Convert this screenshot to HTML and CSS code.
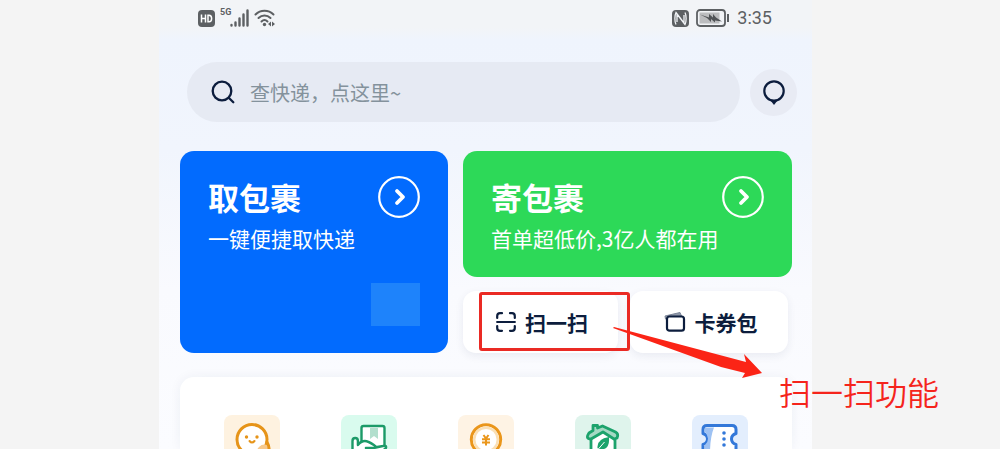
FILE: index.html
```html
<!DOCTYPE html>
<html lang="zh-CN">
<head>
  <meta charset="UTF-8">
  <meta name="viewport" content="width=device-width, initial-scale=1.0">
  <title>扫一扫功能</title>
  <link rel="stylesheet" href="styles.css">
</head>
<body>
  <main class="phone">
    <header class="status">
      <div class="status-group">
        <svg width="17" height="17" viewBox="0 0 17 17">
          <rect width="17" height="17" rx="4" fill="#5d6063"/>
          <path d="M3.500 4.500v8M7.500 4.500v8M3.500 8.500h4M10 5.200v6.600h1c3.500 0 3.500-6.600 0-6.600z" fill="none" stroke="#fff" stroke-width="1.500"/>
        </svg>
        <span class="net">5G</span>
        <svg class="bars" width="19" height="18" viewBox="0 0 19 18" stroke="#5d6063" stroke-width="2.400" stroke-linecap="round">
          <path d="M1.500 16v.5M5.500 13.500v3M9.500 9.500v7M13.500 5.500v11M17.500 1.500v15"/>
        </svg>
        <svg width="22" height="18" viewBox="0 0 22 18" fill="none" stroke="#5d6063" stroke-width="2" stroke-linecap="round">
          <path d="M1.500 5.500c5-5 13-5 18 0M4.500 9c3.500-3.500 8.500-3.500 12 0M7.500 12.500c2-2 4-2 6 0"/>
          <circle cx="10.500" cy="15.500" r="1.700" fill="#5d6063" stroke="none"/>
          <path d="M17 12.500v5l-3-2.500zM18 12.500v5l3-2.500z" fill="#5d6063" stroke="none"/>
        </svg>
      </div>
      <div class="status-group status-right">
        <svg width="17" height="17" viewBox="0 0 17 17">
          <rect width="17" height="17" rx="4" fill="#5d6063"/>
          <path d="M4 14.500c-1.500-3-1.500-9 0-12l8 10.500V5M13 2.500c1.500 3 1.500 9 0 12L5 4v8" fill="none" stroke="#f2f4f7" stroke-width="1.300"/>
        </svg>
        <svg width="34" height="18" viewBox="0 0 34 18">
          <rect x="1" y="1" width="28" height="16" rx="3" fill="none" stroke="#5d6063" stroke-width="1.800"/>
          <rect x="3.500" y="3.500" width="20" height="11" fill="#bcbdbf"/>
          <path d="M4 5.500l9 3V5l4 3.500V5l3 3.500 6 4-7-1v2l-4-3.500v3l-4-4z" fill="#505356"/>
          <path d="M32 5v8" stroke="#5d6063" stroke-width="2"/>
        </svg>
        <time class="clock">3:35</time>
      </div>
    </header>

    <div class="search-row">
      <label class="search">
        <svg width="24" height="24" viewBox="0 0 24 24" fill="none" stroke="#0c1d3d" stroke-width="2.300" stroke-linecap="round">
          <circle cx="11" cy="11" r="9.300"/>
          <path d="M18 18l4.300 4.300"/>
        </svg>
        <input class="search-input" type="text" placeholder="查快递，点这里~" aria-label="查快递">
      </label>
      <button class="message" type="button" aria-label="消息">
        <svg width="24" height="26" viewBox="0 0 24 26">
          <circle cx="12" cy="12" r="9.700" fill="none" stroke="#0c1d3d" stroke-width="2.200"/>
          <path d="M8.500 21.500h7L12 26z" fill="#0c1d3d"/>
        </svg>
      </button>
    </div>

    <section class="cards">
      <a class="card card-pick" href="#">
        <span class="card-head">
          <strong class="card-title">取包裹</strong>
          <svg width="42" height="42" viewBox="0 0 42 42" fill="none" stroke="#fff" stroke-linecap="round" stroke-linejoin="round">
            <circle cx="21" cy="21" r="19.800" stroke-width="2.200"/>
            <path d="M19 15l6 6-6 6" stroke-width="3.800"/>
          </svg>
        </span>
        <span class="card-text">一键便捷取快递</span>
        <span class="card-patch"></span>
      </a>
      <div class="card-side">
        <a class="card card-send" href="#">
          <span class="card-head">
            <strong class="card-title">寄包裹</strong>
            <svg width="42" height="42" viewBox="0 0 42 42" fill="none" stroke="#fff" stroke-linecap="round" stroke-linejoin="round">
              <circle cx="21" cy="21" r="19.800" stroke-width="2.200"/>
              <path d="M19 15l6 6-6 6" stroke-width="3.800"/>
            </svg>
          </span>
          <span class="card-text">首单超低价,3亿人都在用</span>
        </a>
        <div class="tools">
          <div class="tool-wrap">
            <button class="tool" type="button">
              <svg width="20" height="20" viewBox="0 0 20 20" fill="none" stroke="#0c1d3d" stroke-width="2.200" stroke-linecap="round">
                <path d="M1.200 6V4q0-2.800 2.800-2.800h2M14 1.200h2q2.800 0 2.800 2.800v2M1.200 14v2q0 2.800 2.800 2.800h2M14 18.800h2q2.800 0 2.800-2.800v-2"/>
                <path d="M1 10h18" stroke-width="1.800"/>
              </svg>
              扫一扫
            </button>
            <div class="mark-box"></div>
            <svg class="mark-arrow" width="150" height="52" viewBox="0 0 150 52">
              <path d="M0 1L1 0 133 35 131 27 149 46 129 51 132 46 108 40z" fill="#fb2416"/>
            </svg>
            <p class="mark-text">扫一扫功能</p>
          </div>
          <button class="tool" type="button">
            <svg width="22" height="20" viewBox="0 0 22 20">
              <path d="M1.500 7L1 4l15-3.500 1.500 3.500z" fill="#8f98a9" stroke="#7a8497" stroke-linejoin="round"/>
              <rect x="3" y="4.500" width="17" height="14.200" rx="2.500" fill="#fff" stroke="#0c1d3d" stroke-width="2.200"/>
            </svg>
            卡券包
          </button>
        </div>
      </div>
    </section>

    <nav class="panel">
      <a class="entry entry-face" href="#" aria-label="客服">
        <svg width="56" height="56" viewBox="0 0 56 56" fill="none" stroke="#e69419" stroke-linecap="round">
          <circle cx="28" cy="24.500" r="15" fill="#fff" stroke-width="3"/>
          <path d="M33 40a8 8 0 0 1 10-10q3 6-1 13" fill="#f7c98c" stroke="none"/>
          <path d="M43 27q3 5 2 14" stroke-width="3"/>
          <g fill="#e69419" stroke="none"><circle cx="22.500" cy="22" r="1.700"/><circle cx="33" cy="22" r="1.700"/></g>
          <path d="M25.500 26q2.500 3 5 0" stroke-width="2"/>
        </svg>
      </a>
      <a class="entry entry-hand" href="#" aria-label="寄件">
        <svg width="56" height="56" viewBox="0 0 56 56" fill="none" stroke="#1c9a68" stroke-width="2.400" stroke-linejoin="round" stroke-linecap="round">
          <rect x="20.500" y="11" width="23" height="21" rx="2" fill="#fff"/>
          <path d="M29 13h8v11l-4-3-4 3z" fill="#b2dfcd" stroke="none"/>
          <path d="M11.500 44V26q0-3 2.700-3t2.700 3v4q3-4 7-4 3 0 9 4 3 2 1 3h-9 8l9-2q4-1 3 2L33 44z" fill="#fff"/>
        </svg>
      </a>
      <a class="entry entry-coin" href="#" aria-label="红包">
        <svg width="56" height="56" viewBox="0 0 56 56" fill="none" stroke="#ea961b">
          <circle cx="28" cy="24.500" r="14.700" fill="#fff" stroke-width="3"/>
          <circle cx="28" cy="24.500" r="11.800" stroke="#fbe0b5" stroke-width="2.500"/>
          <path d="M25.500 20l2.500 3.500 2.500-3.500M28 23v7.500M24 24.300h8M24 27.500h8" stroke-width="2"/>
        </svg>
      </a>
      <a class="entry entry-house" href="#" aria-label="驿站">
        <svg width="56" height="56" viewBox="0 0 56 56" fill="none" stroke="#1ca36c" stroke-width="2.800" stroke-linejoin="round">
          <path d="M16 22v24h24V22l-12-8z" fill="#fff"/>
          <path d="M14 18l4-2.500V10.500h4.500v2.500l5-2 13 6q3.500 2 1.500 6l-3 1-11-7-12 7q-6 0-2-6z" fill="#a4d9c3"/>
          <path d="M22.500 33q-1-9 11.500-11 1 12-7.500 12.500-3 0-4-1.500z" fill="#1ca36c" stroke="none"/>
          <path d="M22.500 35l7-8" stroke="#fff" stroke-width="1"/>
        </svg>
      </a>
      <a class="entry entry-ticket" href="#" aria-label="优惠券">
        <svg width="56" height="56" viewBox="0 0 56 56" fill="none" stroke="#3378d9" stroke-width="3" stroke-linejoin="round">
          <path d="M15 10.500h25q4 0 4 4v4c-6 2-6 9 0 11v11H11v-11c6-2 6-9 0-11v-4q0-4 4-4z" fill="#fff"/>
          <path d="M13 12.500h9q-4 10-4 26h-5V30q6-6 0-13z" fill="#9ec2f3" stroke="none"/>
          <g fill="#3378d9" stroke="none"><circle cx="32" cy="18" r="1.800"/><circle cx="32" cy="24" r="1.800"/><circle cx="32" cy="30" r="1.800"/></g>
        </svg>
      </a>
    </nav>
  </main>
</body>
</html>
```

FILE: styles.css
```css
* {
  box-sizing: border-box;
}

body {
  margin: 0;
  height: 100vh;
  overflow: hidden;
  background: #f4f4f4;
  font-family: "Noto Sans CJK SC", sans-serif;
  color: #0c1d3d;
}

a {
  color: inherit;
  text-decoration: none;
}

button {
  border: 0;
  font-family: inherit;
  color: inherit;
}

svg {
  flex: none;
}

.phone {
  margin: 0 18.8% 0 15.9%;
  height: 100vh;
  overflow: visible;
  padding: 0 20px 0 21px;
  background: linear-gradient(#f2f4f7 0, #f2f4f7 28px, #eff4fd 40px, #f1f5fd 150px, #f9fafe 290px, #fbfcff 100%);
}

/* status bar */
.status {
  display: flex;
  justify-content: space-between;
  height: 36px;
  padding: 0 20px 0 18px;
}

.status-group {
  display: flex;
  align-items: center;
  gap: 5px;
}

.status-right {
  gap: 7px;
}

.net {
  align-self: flex-start;
  padding-top: 8px;
  font: bold 9px/9px "Roboto", sans-serif;
  color: #5d6063;
}

.bars {
  margin-left: -6px;
}

.clock {
  font: 18px/24px "Roboto", sans-serif;
  color: #5d6063;
}

/* search */
.search-row {
  display: flex;
  align-items: center;
  gap: 10px;
  margin: 26px -5px 0 7px;
}

.search {
  flex: 1;
  display: flex;
  align-items: center;
  gap: 15px;
  height: 60px;
  padding: 0 24px;
  border-radius: 30px;
  background: #e6eaf3;
}

.search-input {
  flex: 1;
  min-width: 0;
  padding: 2px 0 0;
  border: 0;
  outline: 0;
  background: none;
  font: 20px/30px "Noto Sans CJK SC", sans-serif;
}

.search-input::placeholder {
  color: #84929c;
}

.message {
  display: flex;
  align-items: center;
  justify-content: center;
  width: 47px;
  height: 47px;
  padding: 0;
  border-radius: 50%;
  background: #e8ebf4;
}

/* cards */
.cards {
  display: grid;
  grid-template-columns: 268fr 329fr;
  gap: 15px;
  margin-top: 29px;
}

.card {
  display: flex;
  flex-direction: column;
  padding: 25px 28px;
  border-radius: 14px;
  color: #fff;
}

.card-pick {
  padding-bottom: 27px;
  background: #026bfe;
}

.card-send {
  height: 126px;
  background: #2dd958;
}

.card-head {
  display: flex;
  align-items: center;
  justify-content: space-between;
}

.card-title {
  font-size: 31px;
  line-height: 42px;
}

.card-text {
  font-size: 21px;
  line-height: 40px;
  white-space: nowrap;
}

.card-patch {
  align-self: flex-end;
  width: 49px;
  height: 43px;
  margin-top: auto;
  background: #1e83fb;
}

.card-side {
  display: flex;
  flex-direction: column;
  gap: 14px;
}

.tools {
  display: flex;
  gap: 12px;
  padding-right: 4px;
}

.tool-wrap {
  position: relative;
  flex: 1;
}

.tools > .tool {
  flex: 1;
}

.tool {
  display: flex;
  align-items: center;
  justify-content: center;
  gap: 9px;
  width: 100%;
  height: 62px;
  padding: 0 0 0 3px;
  border-radius: 13px;
  background: #fff;
  box-shadow: 0 3px 8px rgba(40, 50, 90, 0.08);
  font-size: 21px;
  font-weight: bold;
}

/* red marks over the scan button */
.mark-box {
  position: absolute;
  top: 1px;
  left: 16px;
  width: 151px;
  height: 59px;
  border: 3px solid #ea2a24;
  border-radius: 3px;
}

.mark-arrow {
  position: absolute;
  top: 36px;
  left: 150px;
}

.mark-text {
  position: absolute;
  top: 77px;
  left: 316px;
  margin: 0;
  font-size: 32px;
  font-weight: 350;
  line-height: 46px;
  white-space: nowrap;
  color: #f5241c;
}

/* bottom panel */
.panel {
  display: grid;
  grid-template-columns: repeat(5, 1fr);
  justify-items: center;
  height: calc(100vh - 377px);
  min-height: 72px;
  margin-top: 24px;
  padding: 38px 14px 0;
  overflow: hidden;
  border-radius: 14px 14px 0 0;
  background: #fff;
  box-shadow: 0 0 12px rgba(40, 50, 90, 0.06);
}

.entry {
  width: 56px;
  height: 56px;
  border-radius: 8px;
}

.entry-face {
  background: #fef2e0;
}

.entry-hand {
  background: #d9fbee;
}

.entry-coin {
  background: #fef3e4;
}

.entry-house {
  background: #dff4ec;
}

.entry-ticket {
  background: #e3eefd;
}
```
